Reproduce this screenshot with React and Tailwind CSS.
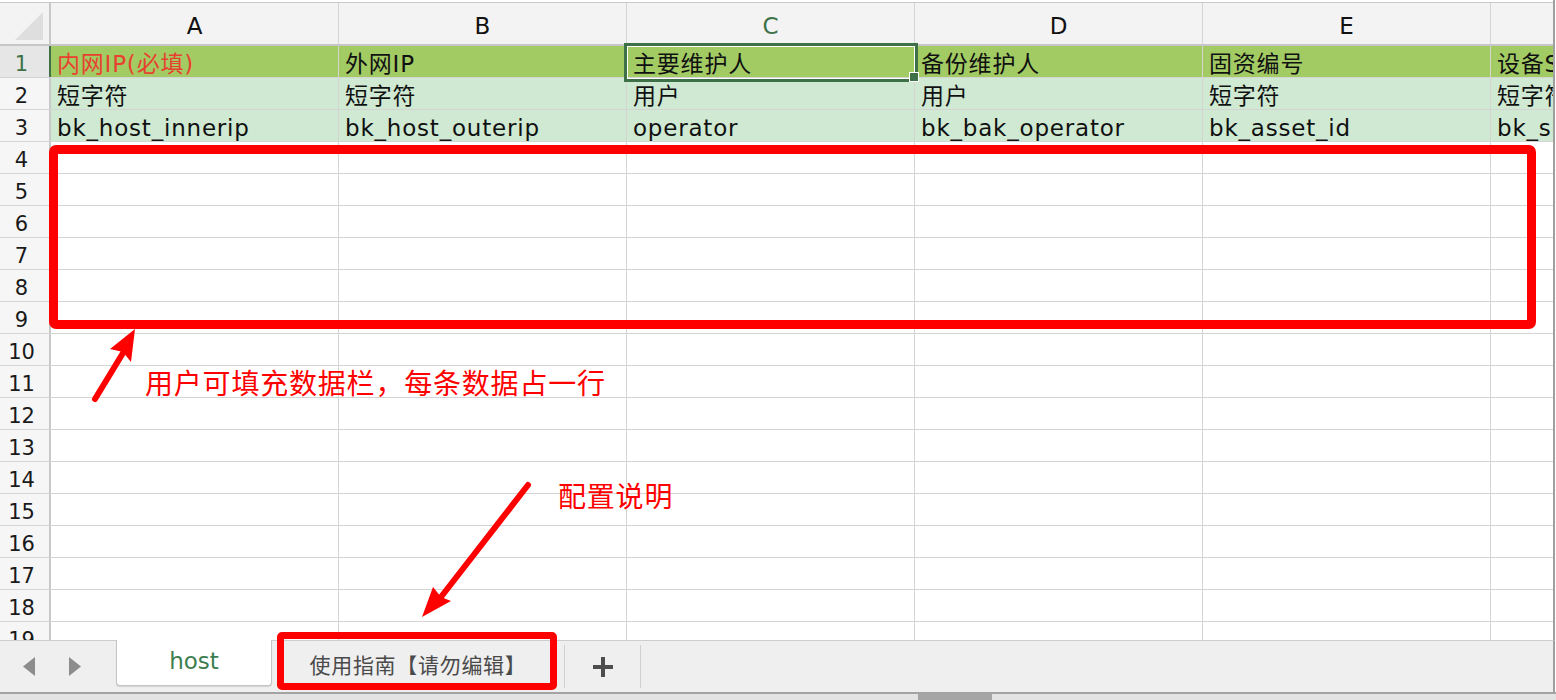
import React from 'react';

const COLS = ['A', 'B', 'C', 'D', 'E', ''];
const ROW1 = ['内网IP(必填)', '外网IP', '主要维护人', '备份维护人', '固资编号', '设备SN'];
const ROW2 = ['短字符', '短字符', '用户', '用户', '短字符', '短字符'];
const ROW3 = ['bk_host_innerip', 'bk_host_outerip', 'operator', 'bk_bak_operator', 'bk_asset_id', 'bk_sn'];

const colW = (i) => (i === 5 ? 'w-[62px]' : 'w-[288px] border-r border-[#d4d4d4]');

const Row = ({ n, cells, bg = '', active = false }) => (
  <div className="flex h-[32px] shrink-0 border-b border-[#d4d4d4]">
    <div
      className={`w-[51px] shrink-0 flex items-center justify-center pr-[6px] pt-[6px] text-[21px] border-r-2 ${
        active ? 'bg-[#e6e6e6] text-[#3e7148] border-[#3e7148]' : 'bg-[#f6f6f6] text-[#1a1a1a] border-[#c8c8c8]'
      }`}
    >
      {n}
    </div>
    {COLS.map((c, i) => (
      <div
        key={i}
        className={`${colW(i)} shrink-0 overflow-hidden whitespace-nowrap flex items-center pl-[6px] pt-[5px] text-[23px] tracking-[0.8px] ${bg} ${
          n === 1 && i === 0 ? 'text-[#e8412f]' : 'text-[#111]'
        }`}
      >
        {cells ? cells[i] : ''}
      </div>
    ))}
  </div>
);

export default function App() {
  const empty = Array.from({ length: 16 }, (_, i) => i + 4);

  return (
    <div className="relative w-[1556px] h-[700px] overflow-hidden bg-white font-['DejaVu_Sans','Noto_Sans_CJK_SC',sans-serif]">
      {/* sheet grid */}
      <div className="w-[1555px] h-[640px] overflow-hidden border-r-2 border-[#9f9f9f] flex flex-col">
        <div className="h-[3px] shrink-0 border-b border-[#c9c9c9]" />
        <div className="flex h-[43px] shrink-0 bg-[#f3f3f3] border-b-2 border-[#c6c6c6]">
          <div className="w-[51px] shrink-0 border-r-2 border-[#c8c8c8] flex items-end justify-end pr-[5px] pb-[3px]">
            <svg width="30" height="30" viewBox="0 0 30 30">
              <polygon points="29,1 29,29 1,29" fill="#dedede" />
            </svg>
          </div>
          {COLS.map((c, i) => (
            <div
              key={i}
              className={`${colW(i)} shrink-0 flex items-center justify-center pt-[6px] text-[23px] ${
                c === 'C' ? 'text-[#3e7148]' : 'text-[#111]'
              }`}
            >
              {c}
            </div>
          ))}
        </div>
        <Row n={1} cells={ROW1} bg="bg-[#a2cb64]" active />
        <Row n={2} cells={ROW2} bg="bg-[#cfe9d2]" />
        <Row n={3} cells={ROW3} bg="bg-[#cfe9d2]" />
        {empty.map((n) => (
          <Row key={n} n={n} />
        ))}
      </div>

      {/* sheet tabs */}
      <div className="h-[52px] flex items-stretch bg-[#efefef] border-t border-[#cdcdcd] border-r-2 border-r-[#9f9f9f] w-[1555px]">
        <div className="w-[116px] shrink-0 flex items-center gap-[34px] pl-[23px]">
          <svg width="12" height="19" viewBox="0 0 12 19">
            <polygon points="12,0 12,19 0,9.5" fill="#8c8c8c" />
          </svg>
          <svg width="12" height="19" viewBox="0 0 12 19">
            <polygon points="0,0 0,19 12,9.5" fill="#8c8c8c" />
          </svg>
        </div>
        <div className="w-[156px] h-[46px] -mt-px shrink-0 bg-white border border-t-0 border-[#c4c4c4] rounded-b-[4px] shadow-[0_1px_1px_rgba(0,0,0,0.12)] flex items-center justify-center text-[23px] text-[#3c7d4e] pb-[2px]">
          host
        </div>
        <div className="w-[293px] shrink-0 flex items-center justify-center text-[21px] tracking-[0.7px] text-[#4a4a4a] font-['Noto_Sans_CJK_SC',sans-serif] pb-[4px] border-r border-[#d0d0d0] my-[4px]">
          使用指南【请勿编辑】
        </div>
        <div className="w-[76px] shrink-0 flex items-center justify-center border-r border-[#d0d0d0] my-[4px]">
          <svg width="20" height="20" viewBox="0 0 20 20">
            <rect x="8" y="0" width="4" height="20" fill="#4d4d4d" />
            <rect x="0" y="8" width="20" height="4" fill="#4d4d4d" />
          </svg>
        </div>
      </div>
      <div className="h-[2px] bg-[#a3a3a3]" />
      <div className="h-[6px] bg-[#e3e3e3] flex">
        <div className="ml-[918px] w-[74px] bg-[#a5a5a5]" />
      </div>

      {/* selected cell C1 */}
      <div className="absolute left-[624px] top-[43px] w-[294px] h-[39px] border-[3px] border-[#3e7148]">
        <div className="w-full h-full border border-white" />
      </div>
      <div className="absolute left-[909px] top-[72px] w-[10px] h-[10px] bg-[#3e7148] border border-white" />

      {/* annotations */}
      <div className="absolute left-[49px] top-[145px] w-[1487px] h-[184px] border-[9px] border-[#ff0000] rounded-[7px]" />
      <div className="absolute left-[277px] top-[632px] w-[280px] h-[58px] border-[7px] border-[#ff0000] rounded-[5px]" />

      <div className="absolute left-[145px] top-[366px] text-[28px] leading-[32px] tracking-[0.8px] text-[#ff0000] whitespace-nowrap font-['Noto_Sans_CJK_SC',sans-serif]">
        用户可填充数据栏，每条数据占一行
      </div>
      <div className="absolute left-[558px] top-[479px] text-[28px] leading-[32px] tracking-[0.8px] text-[#ff0000] whitespace-nowrap font-['Noto_Sans_CJK_SC',sans-serif]">
        配置说明
      </div>

      <svg className="absolute left-0 top-0 pointer-events-none" width="1556" height="700">
        <line x1="95" y1="399" x2="123" y2="353" stroke="#ff0000" strokeWidth="6" strokeLinecap="round" />
        <polygon points="135,329 131,362 123,352 110,349" fill="#ff0000" />
        <line x1="528" y1="485" x2="441" y2="597" stroke="#ff0000" strokeWidth="6" strokeLinecap="round" />
        <polygon points="422,617 433,587 441,597 451,601" fill="#ff0000" />
      </svg>
    </div>
  );
}
